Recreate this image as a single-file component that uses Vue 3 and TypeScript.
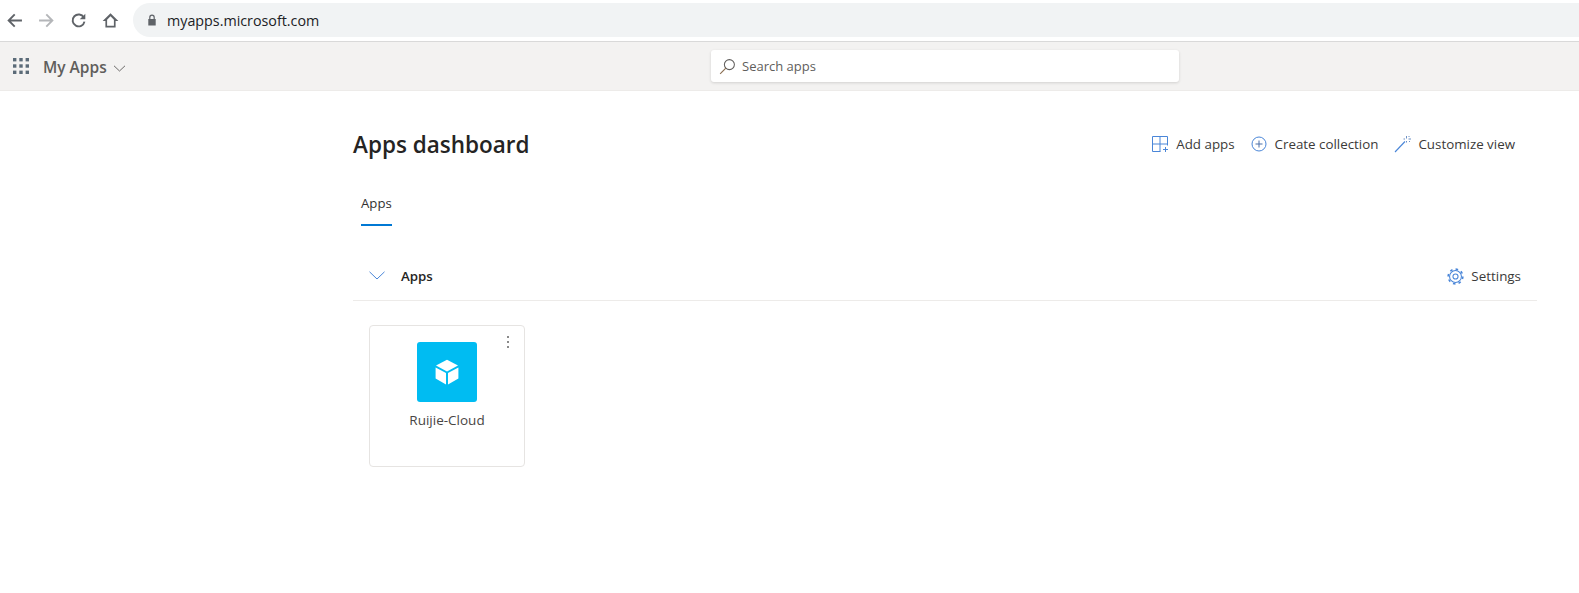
<template>
  <div class="page">
    <div class="browser-bar">
      <svg class="nav-icon" viewBox="0 0 16 16"><path d="M15 8H2.5M8.2 2.3 2.5 8l5.7 5.7" fill="none" stroke="#5f6368" stroke-width="1.8" /></svg>
      <svg class="nav-icon fwd" viewBox="0 0 16 16"><path d="M1 8h12.5M7.8 2.3 13.5 8l-5.7 5.7" fill="none" stroke="#b4b6b9" stroke-width="1.8" /></svg>
      <svg class="nav-icon reload" viewBox="0 0 16 16"><path d="M13 5.2A5.6 5.6 0 1 0 13.6 9" fill="none" stroke="#5f6368" stroke-width="1.8" /><path d="M14.4 1.6v5.2H9.2z" fill="#5f6368" /></svg>
      <svg class="nav-icon home" viewBox="0 0 16 16"><path d="M8 1.2.6 8.4h2.6v6.2h9.6V8.4h2.6zM4.8 13V7.2L8 4l3.2 3.2V13z" fill="#5f6368" fill-rule="evenodd" /></svg>
      <div class="url-pill">
        <svg class="lock" viewBox="0 0 10 12"><path d="M2.2 5V3.4a2.8 2.8 0 0 1 5.6 0V5h.9v6.6H1.3V5zm1.2 0h3.2V3.4a1.6 1.6 0 0 0-3.2 0z" fill="#5f6368" fill-rule="evenodd" /></svg>
        <span>myapps.microsoft.com</span>
      </div>
    </div>

    <header class="app-bar">
      <svg class="waffle" viewBox="0 0 16 16">
        <g fill="#5b6b78">
          <template v-for="y in dots" :key="y">
            <rect v-for="x in dots" :key="x" :x="x" :y="y" width="3.4" height="3.4" />
          </template>
        </g>
      </svg>
      <span class="app-title">My Apps</span>
      <svg class="title-chevron" viewBox="0 0 12 7"><path d="M.5.8 6 6l5.5-5.2" fill="none" stroke="#6b6a69" /></svg>
      <div class="search-box">
        <svg class="search-icon" viewBox="0 0 18 18"><circle cx="11" cy="7" r="5.3" fill="none" stroke="#605e5c" stroke-width="1.1" /><path d="M7.2 10.8 1.2 16.8" stroke="#8a6d50" stroke-width="1.2" /></svg>
        <span>Search apps</span>
      </div>
    </header>

    <main class="content">
      <div class="title-row">
        <h1>Apps dashboard</h1>
        <div class="actions">
          <div class="action">
            <svg viewBox="0 0 16 16" class="action-icon"><path d="M.5 15.5V.5h15v9M.5 8h15M8 .5v15M.5 15.5h8M11 13.5h5M13.5 11v5" fill="none" stroke="#4a86d8" /></svg>
            <span>Add apps</span>
          </div>
          <div class="action">
            <svg viewBox="0 0 16 16" class="action-icon"><circle cx="8" cy="8" r="7" fill="none" stroke="#4a86d8" /><path d="M8 4.5v7M4.5 8h7" stroke="#4a6fa8" /></svg>
            <span>Create collection</span>
          </div>
          <div class="action tight">
            <svg viewBox="0 0 18 18" class="action-icon wand"><path d="M1 17 11 6.5" stroke="#4a86d8" stroke-width="1.1" /><path d="M12.5 1v2.5M12.5 6v1.5M9.5 4h1.5M14.5 4H17M14.5 2l1-1M15 6l1 1" stroke="#6b8fc4" /></svg>
            <span>Customize view</span>
          </div>
        </div>
      </div>

      <div class="tabs">
        <div class="tab">Apps</div>
      </div>

      <div class="section-head">
        <svg class="section-chevron" viewBox="0 0 16 9"><path d="M.5.8 8 8l7.5-7.2" fill="none" stroke="#4a86d8" /></svg>
        <span class="section-title">Apps</span>
        <div class="settings">
          <svg viewBox="0 0 16 16" class="settings-icon">
            <circle cx="8" cy="8" r="2.4" fill="none" stroke="#4a86d8" />
            <circle cx="8" cy="8" r="5.6" fill="none" stroke="#4a86d8" />
            <circle cx="8" cy="8" r="6.9" fill="none" stroke="#4a86d8" stroke-width="1.5" stroke-dasharray="2.4 3" />
          </svg>
          <span>Settings</span>
        </div>
      </div>

      <div class="cards">
        <div class="card">
          <div class="card-menu"><i></i><i></i><i></i></div>
          <div class="tile">
            <svg viewBox="0 0 24 26" class="cube">
              <path d="M12 .8 23 6.6 12 12.4 1 6.6z" fill="#fff" />
              <path d="M.6 8.4 11 14v11.4L.6 19.6zM23.4 8.4 13 14v11.4l10.4-5.8z" fill="#fff" />
            </svg>
          </div>
          <div class="card-name">Ruijie-Cloud</div>
        </div>
      </div>
    </main>
  </div>
</template>

<script setup lang="ts">
const dots: number[] = [0, 6.3, 12.6];
</script>

<style>
html,
body {
  margin: 0;
  background: #fff;
}
</style>

<style scoped>
.page {
  height: 593px;
  overflow: hidden;
  font-family: "Open Sans", "Noto Sans", sans-serif;
  color: #323130;
}

.browser-bar {
  height: 42px;
  box-sizing: border-box;
  padding-top: 3px;
  display: flex;
  border-bottom: 1px solid #d9d9d9;
}
.nav-icon {
  width: 17px;
  height: 17px;
  margin: 9px 0 0 6px;
}
.fwd {
  margin-left: 15px;
}
.reload {
  margin-left: 15px;
}
.home {
  margin-left: 15px;
}
.url-pill {
  flex: 1;
  height: 34px;
  margin-left: 14px;
  border-radius: 17px 0 0 17px;
  background: #f1f3f4;
  display: flex;
  align-items: center;
  padding-left: 14px;
  font-size: 14.3px;
  color: #202124;
}
.lock {
  width: 10px;
  height: 12px;
  margin-right: 10px;
}

.app-bar {
  height: 49px;
  background: #f3f2f1;
  border-bottom: 1px solid #edebe9;
  box-sizing: border-box;
  display: flex;
  align-items: center;
  padding-left: 13px;
  position: relative;
}
.waffle {
  width: 16px;
  height: 16px;
}
.app-title {
  margin-left: 14px;
  margin-top: 2px;
  font-size: 15.5px;
  font-weight: 600;
  color: #605e5c;
}
.title-chevron {
  width: 13px;
  height: 7px;
  margin-left: 6px;
  margin-top: 4px;
}
.search-box {
  position: absolute;
  left: 711px;
  top: 8px;
  width: 468px;
  height: 32px;
  background: #fff;
  border-radius: 3px;
  box-shadow: 0 1px 3px rgba(0, 0, 0, 0.14);
  display: flex;
  align-items: center;
  font-size: 13px;
  color: #605e5c;
}
.search-icon {
  width: 17px;
  height: 17px;
  margin: 0 6px 0 8px;
}

.content {
  margin-left: 353px;
  width: 1184px;
}
.title-row {
  display: flex;
  align-items: center;
  justify-content: space-between;
  height: 32px;
  margin-top: 36px;
}
h1 {
  margin: 0;
  padding-top: 2px;
  font-size: 22.5px;
  font-weight: 600;
  color: #252423;
}
.actions {
  display: flex;
  gap: 16px;
  margin-right: 22px;
  padding-top: 1px;
}
.action {
  display: flex;
  align-items: center;
  gap: 8px;
  font-size: 13.35px;
  color: #3b3a39;
}
.tight {
  gap: 6px;
}
.action-icon {
  width: 16px;
  height: 16px;
}
.wand {
  width: 18px;
  height: 18px;
}

.tabs {
  display: flex;
  margin-top: 34px;
  padding-left: 8px;
}
.tab {
  font-size: 13.2px;
  height: 31px;
  line-height: 20px;
  border-bottom: 2px solid #0078d4;
}

.section-head {
  display: flex;
  align-items: center;
  height: 50px;
  box-sizing: content-box;
  margin-top: 24px;
  padding-left: 16px;
  border-bottom: 1px solid #edebe9;
  position: relative;
}
.section-chevron {
  width: 16px;
  height: 9px;
}
.section-title {
  margin-left: 16px;
  margin-top: 2px;
  font-size: 13.3px;
  font-weight: 600;
  color: #252423;
}
.settings {
  margin-left: auto;
  margin-right: 16px;
  margin-top: 2px;
  display: flex;
  align-items: center;
  gap: 7px;
  font-size: 13.4px;
  color: #3b3a39;
}
.settings-icon {
  width: 17px;
  height: 17px;
}

.cards {
  display: flex;
  padding: 24px 0 0 16px;
}
.card {
  width: 156px;
  height: 142px;
  box-sizing: border-box;
  border: 1px solid #e6e4e2;
  border-radius: 4px;
  position: relative;
  display: flex;
  flex-direction: column;
  align-items: center;
  padding-top: 16px;
}
.card-menu {
  position: absolute;
  top: 10px;
  right: 15px;
  display: flex;
  flex-direction: column;
  gap: 3px;
}
.card-menu i {
  display: block;
  width: 2px;
  height: 2px;
  background: #8a8a8a;
}
.tile {
  width: 60px;
  height: 60px;
  background: #00bcf2;
  border-radius: 3px;
  display: flex;
  align-items: center;
  justify-content: center;
}
.cube {
  width: 24px;
  height: 26px;
}
.card-name {
  margin-top: 9px;
  font-size: 13.5px;
  color: #484644;
}
</style>
